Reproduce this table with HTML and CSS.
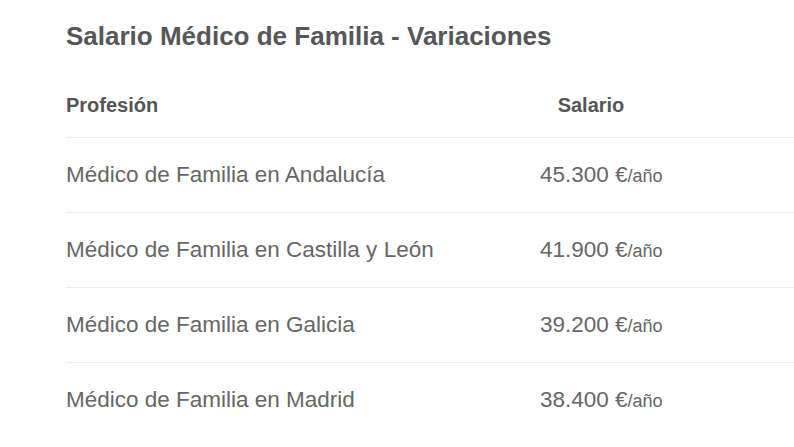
FILE: index.html
```html
<!DOCTYPE html>
<html lang="es">
<head>
<meta charset="utf-8">
<title>Salario Médico de Familia - Variaciones</title>
<link rel="stylesheet" href="styles.css">
</head>
<body>
<section class="salary">
  <h2 class="salary__title">Salario Médico de Familia - Variaciones</h2>
  <div class="salary__table">
    <div class="row row--head">
      <div class="cell cell--name">Profesión</div>
      <div class="cell cell--value">Salario</div>
    </div>
    <div class="row">
      <div class="cell cell--name">Médico de Familia en Andalucía</div>
      <div class="cell cell--value">45.300 €<span class="unit">/año</span></div>
    </div>
    <div class="row">
      <div class="cell cell--name">Médico de Familia en Castilla y León</div>
      <div class="cell cell--value">41.900 €<span class="unit">/año</span></div>
    </div>
    <div class="row">
      <div class="cell cell--name">Médico de Familia en Galicia</div>
      <div class="cell cell--value">39.200 €<span class="unit">/año</span></div>
    </div>
    <div class="row">
      <div class="cell cell--name">Médico de Familia en Madrid</div>
      <div class="cell cell--value">38.400 €<span class="unit">/año</span></div>
    </div>
  </div>
</section>
</body>
</html>
```
FILE: styles.css
```css
html, body {
  margin: 0;
  padding: 0;
  background: #ffffff;
}

body {
  font-family: "Liberation Sans", Arial, sans-serif;
  color: #666666;
}

.salary {
  padding: 20px 0 0 66px;
}

.salary__title {
  margin: 0;
  font-size: 26px;
  font-weight: bold;
  color: #56575a;
  line-height: 32px;
}

.salary__table {
  margin-top: 36px;
}

.row {
  display: grid;
  grid-template-columns: 474px 102px;
  align-items: center;
  box-sizing: border-box;
  height: 75px;
  border-top: 1px solid #eeeeee;
}

.row--head {
  height: 49px;
  border-top: none;
  align-items: start;
  padding-top: 6px;
}

.row--head .cell {
  font-size: 20px;
  line-height: 22px;
  font-weight: bold;
  color: #555555;
}

.row--head .cell--value {
  text-align: center;
}

.cell {
  font-size: 22.5px;
  color: #666666;
  white-space: nowrap;
}

.unit {
  font-size: 18px;
}
```
